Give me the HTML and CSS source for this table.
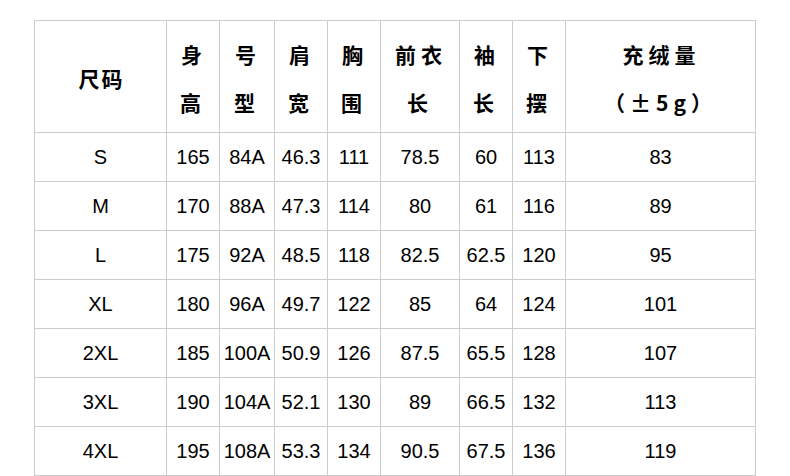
FILE: index.html
```html
<!DOCTYPE html>
<html lang="zh">
<head>
<meta charset="utf-8">
<title>尺码表</title>
<link rel="stylesheet" href="styles.css">
</head>
<body>
<div class="wrap">
<table class="size-table">
  <colgroup>
    <col class="c-size"><col class="c-n"><col class="c-n2"><col class="c-n"><col class="c-n"><col class="c-w"><col class="c-n"><col class="c-n"><col class="c-fill">
  </colgroup>
  <thead>
    <tr>
      <th class="h-size">尺码</th>
      <th>身<br>高</th>
      <th>号<br>型</th>
      <th>肩<br>宽</th>
      <th>胸<br>围</th>
      <th>前衣<br>长</th>
      <th>袖<br>长</th>
      <th>下<br>摆</th>
      <th>充绒量<br>（±5g）</th>
    </tr>
  </thead>
  <tbody>
    <tr><td>S</td><td>165</td><td>84A</td><td>46.3</td><td>111</td><td>78.5</td><td>60</td><td>113</td><td>83</td></tr>
    <tr><td>M</td><td>170</td><td>88A</td><td>47.3</td><td>114</td><td>80</td><td>61</td><td>116</td><td>89</td></tr>
    <tr><td>L</td><td>175</td><td>92A</td><td>48.5</td><td>118</td><td>82.5</td><td>62.5</td><td>120</td><td>95</td></tr>
    <tr><td>XL</td><td>180</td><td>96A</td><td>49.7</td><td>122</td><td>85</td><td>64</td><td>124</td><td>101</td></tr>
    <tr><td>2XL</td><td>185</td><td>100A</td><td>50.9</td><td>126</td><td>87.5</td><td>65.5</td><td>128</td><td>107</td></tr>
    <tr><td>3XL</td><td>190</td><td>104A</td><td>52.1</td><td>130</td><td>89</td><td>66.5</td><td>132</td><td>113</td></tr>
    <tr><td>4XL</td><td>195</td><td>108A</td><td>53.3</td><td>134</td><td>90.5</td><td>67.5</td><td>136</td><td>119</td></tr>
  </tbody>
</table>
</div>
</body>
</html>
```
FILE: styles.css
```css
html, body {
  margin: 0;
  padding: 0;
  background: #fff;
}
.wrap {
  padding-top: 20px;
  padding-left: 34px;
}
.size-table {
  border-collapse: collapse;
  table-layout: fixed;
  width: 722px;
  color: #000;
  font-family: "Liberation Sans", "Noto Sans CJK SC", sans-serif;
}
.c-size { width: 132px; }
.c-n { width: 53px; }
.c-n2 { width: 55px; }
.c-w { width: 79px; }
.c-fill { width: 190px; }
.size-table th,
.size-table td {
  border: 1px solid #cccccc;
  text-align: center;
  vertical-align: middle;
  padding: 0;
}
.size-table th {
  height: 112px;
  font-family: "Noto Sans CJK SC", sans-serif;
  font-weight: 700;
  font-size: 21px;
  line-height: 48px;
  letter-spacing: 5px;
  text-indent: 2px;
  padding-top: 2px;
  box-sizing: border-box;
}
.size-table th.h-size {
  letter-spacing: 2px;
  text-indent: 2px;
}
.size-table td {
  height: 48px;
  font-size: 20px;
  line-height: 24px;
  letter-spacing: 0;
  white-space: nowrap;
}
```
